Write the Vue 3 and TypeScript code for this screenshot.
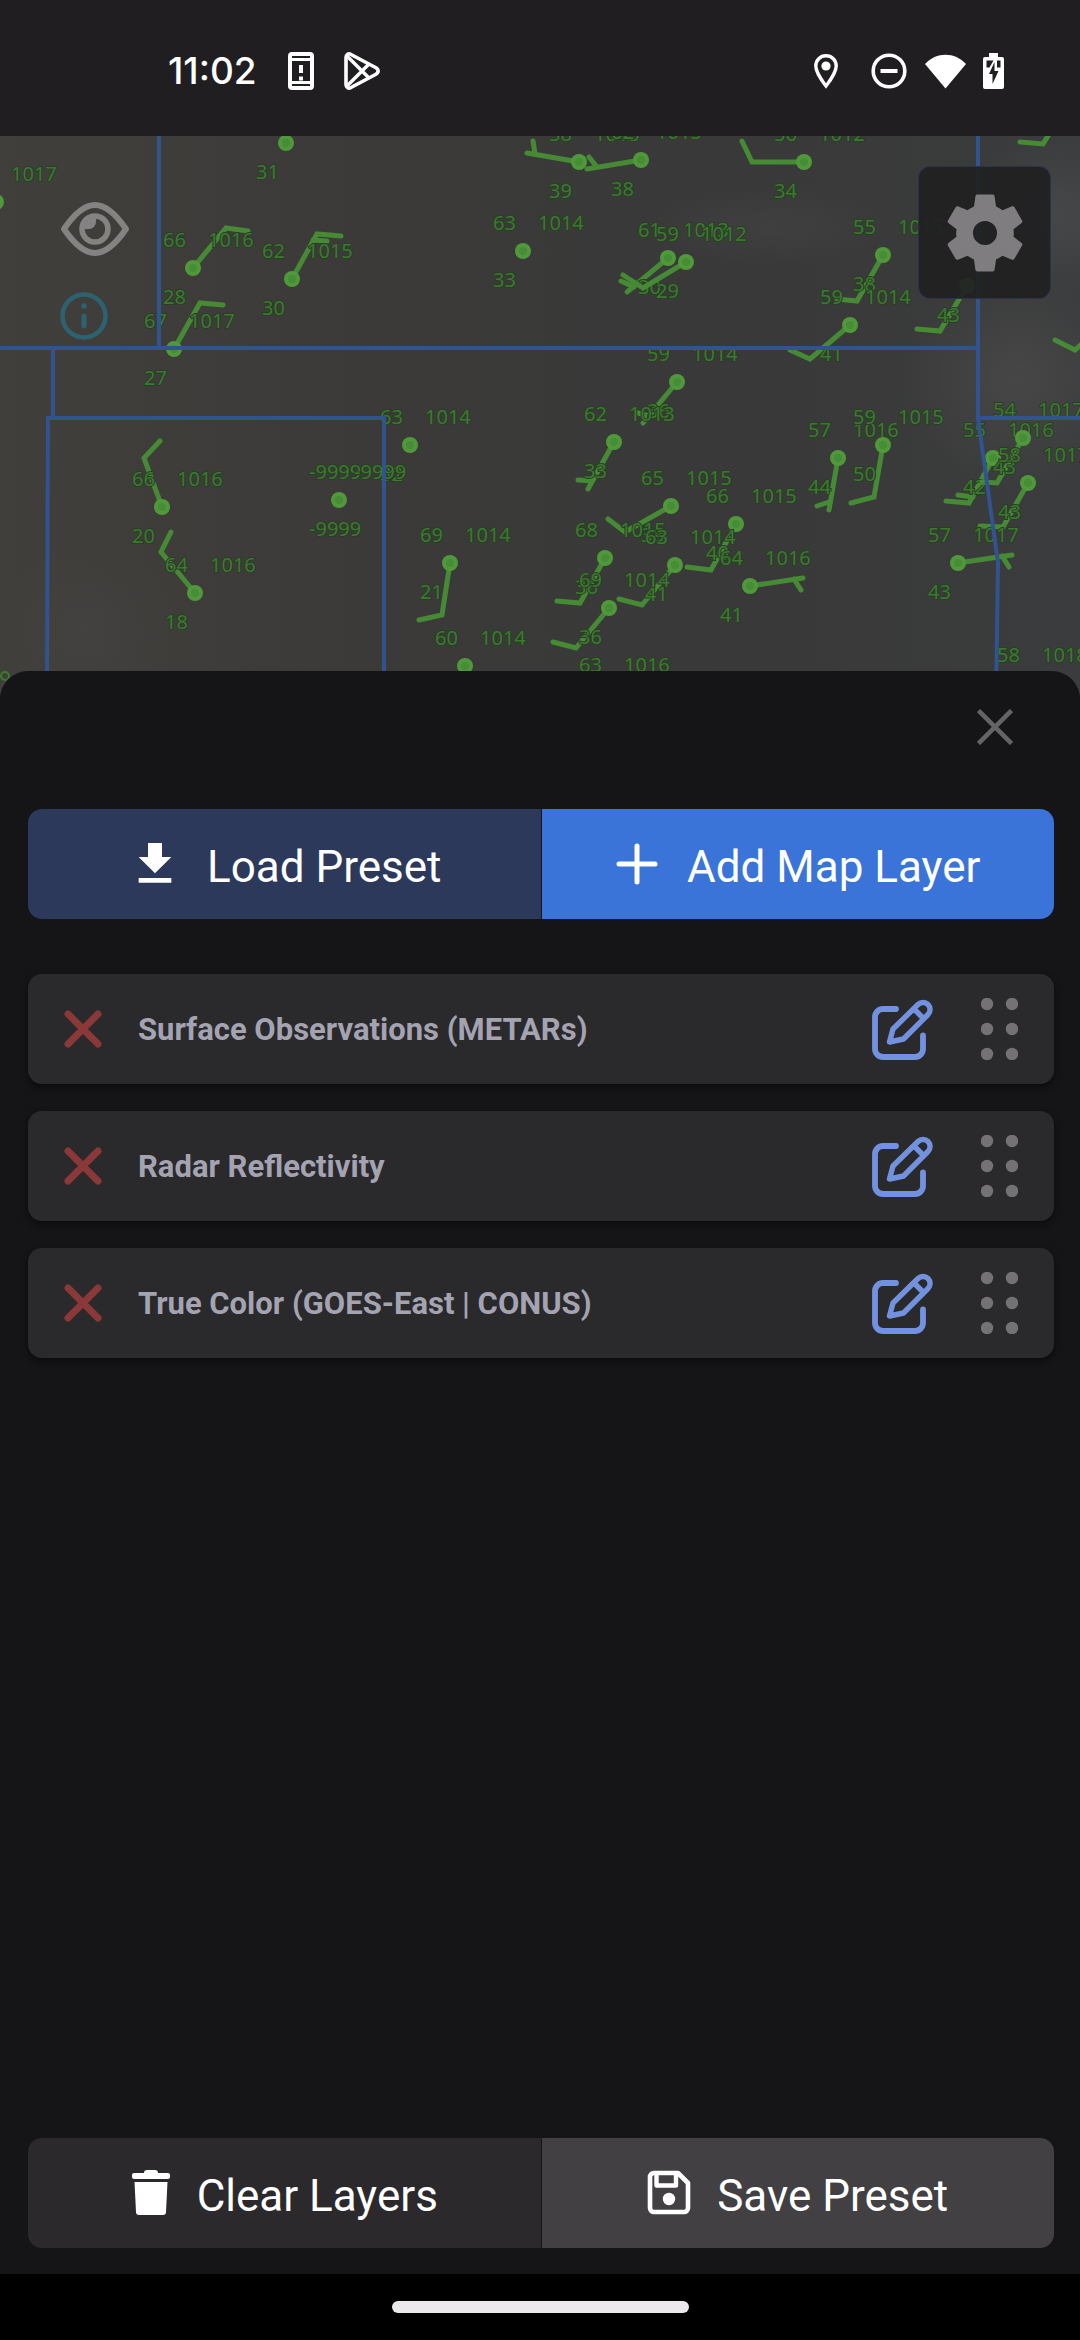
<script setup lang="ts">
import { ref } from 'vue'

interface Station {
  x: number
  y: number
  temp?: string
  pressure?: string
  dew?: string
  barb?: string
}

interface Layer {
  id: number
  name: string
}

const stations: Station[] = [
  { x: -4, y: 202, pressure: '1017' },
  { x: 286, y: 143, dew: '31' },
  { x: 193, y: 268, temp: '66', pressure: '1016', dew: '28', barb: 'M193 268L226 228L248 231' },
  { x: 292, y: 279, temp: '62', pressure: '1015', dew: '30', barb: 'M292 279L317 234L341 236M313 240L327 241' },
  { x: 174, y: 349, temp: '67', pressure: '1017', dew: '27', barb: 'M174 349L200 303L223 305' },
  { x: 579, y: 162, temp: '58', pressure: '1015', dew: '39', barb: 'M579 162L527 153M535 154L533 141' },
  { x: 641, y: 160, temp: '62', pressure: '1015', dew: '38', barb: 'M641 160L587 169M597 167L589 157' },
  { x: 804, y: 162, temp: '56', pressure: '1012', dew: '34', barb: 'M804 162H752L742 141' },
  { x: 523, y: 251, temp: '63', pressure: '1014', dew: '33' },
  { x: 668, y: 258, temp: '61', pressure: '1013', dew: '30', barb: 'M668 258L627 292M634 287L621 281' },
  { x: 686, y: 262, temp: '59', pressure: '1012', dew: '29', barb: 'M686 262L643 288L623 275' },
  { x: 677, y: 382, temp: '59', pressure: '1014', dew: '36', barb: 'M677 382L643 423M649 416L638 413' },
  { x: 410, y: 445, temp: '63', pressure: '1014', dew: '32' },
  { x: 614, y: 442, temp: '62', pressure: '1013', dew: '33', barb: 'M614 442L588 489M592 481L578 480' },
  { x: 671, y: 506, temp: '65', pressure: '1015', dew: '38', barb: 'M671 506L625 532L608 519' },
  { x: 736, y: 524, temp: '66', pressure: '1015', dew: '40', barb: 'M736 524L711 570L687 567' },
  { x: 605, y: 558, temp: '68', pressure: '1015', dew: '36', barb: 'M605 558L580 603L557 601' },
  { x: 675, y: 565, temp: '63', pressure: '1014', dew: '41', barb: 'M675 565L642 605L619 599' },
  { x: 609, y: 608, temp: '69', pressure: '1014', dew: '36', barb: 'M609 608L576 648L553 642' },
  { x: 750, y: 586, temp: '64', pressure: '1016', dew: '41', barb: 'M750 586L803 578M794 579L801 590' },
  { x: 450, y: 563, temp: '69', pressure: '1014', dew: '21', barb: 'M450 563L442 615L419 620' },
  { x: 465, y: 666, temp: '60', pressure: '1014' },
  { x: 609, y: 693, temp: '63', pressure: '1016' },
  { x: 162, y: 507, temp: '66', pressure: '1016', dew: '20', barb: 'M162 507L144 458L160 441' },
  { x: 195, y: 593, temp: '64', pressure: '1016', dew: '18', barb: 'M195 593L161 552L171 532' },
  { x: 339, y: 500, temp: '-9999', pressure: '-9999', dew: '-9999' },
  { x: 883, y: 255, temp: '55', pressure: '1015', dew: '38', barb: 'M883 255L857 301L837 299' },
  { x: 850, y: 325, temp: '59', pressure: '1014', dew: '41', barb: 'M850 325L810 359L790 350' },
  { x: 967, y: 286, dew: '43', barb: 'M967 286L940 331L917 329' },
  { x: 1064, y: 110, barb: 'M1064 110L1043 144L1020 142' },
  { x: 1112, y: 318, barb: 'M1112 318L1075 350L1055 340' },
  { x: 838, y: 458, temp: '57', pressure: '1016', dew: '44', barb: 'M838 458L829 510M829 502L817 506' },
  { x: 883, y: 445, temp: '59', pressure: '1015', dew: '50', barb: 'M883 445L874 497L851 503' },
  { x: 993, y: 458, temp: '55', pressure: '1016', dew: '42', barb: 'M993 458L969 503L946 501M973 497L958 495' },
  { x: 1023, y: 438, temp: '54', pressure: '1017', dew: '43', barb: 'M1023 438L997 483L982 482' },
  { x: 1028, y: 483, temp: '58', pressure: '1017', dew: '43', barb: 'M1028 483L1003 527L980 526' },
  { x: 958, y: 563, temp: '57', pressure: '1017', dew: '43', barb: 'M958 563L1012 555M1002 556L1009 567' },
  { x: 1027, y: 683, temp: '58', pressure: '1018' },
]

const layers = ref<Layer[]>([
  { id: 1, name: 'Surface Observations (METARs)' },
  { id: 2, name: 'Radar Reflectivity' },
  { id: 3, name: 'True Color (GOES-East | CONUS)' },
])

const dots = [6, 31, 56].flatMap((y) => [6, 31].map((x) => ({ x, y })))

function removeLayer(id: number) {
  layers.value = layers.value.filter((layer) => layer.id !== id)
}
</script>

<template>
  <div class="app">
    <header class="status">
      <div class="status-left">
        <time class="clock">11:02</time>
        <svg width="26" height="38" viewBox="0 0 26 38">
          <rect x="2" y="2" width="22" height="34" rx="2" fill="none" stroke="#fff" stroke-width="4" />
          <path d="M3 7.500H23M3 30.500H23" stroke="#fff" stroke-width="3" />
          <path d="M13 13v8M13 24.500v4" stroke="#fff" stroke-width="4" />
        </svg>
        <svg class="play" width="36" height="38" viewBox="0 0 36 38" fill="none" stroke="#fff" stroke-linejoin="round">
          <path d="M2 5.500C2 2.500 4.500 1 7 2.500L31.500 15.500C35 17.500 35 20.500 31.500 22.500L7 35.500C4.500 37 2 35.500 2 32.500Z" stroke-width="3.600" />
          <path d="M3 4L25 26M3 34L25 12" stroke-width="3.400" />
        </svg>
      </div>
      <div class="status-right">
        <svg class="pin" width="24" height="35" viewBox="0 0 24 35">
          <path d="M12 1.800C6.200 1.800 1.800 6.300 1.800 12C1.800 19 12 32 12 32S22.200 19 22.200 12C22.200 6.300 17.800 1.800 12 1.800Z" fill="none" stroke="#fff" stroke-width="3.400" />
          <circle cx="12" cy="12" r="4.600" fill="#fff" />
        </svg>
        <svg class="dnd" width="36" height="36" viewBox="0 0 36 36" stroke="#fff" fill="none">
          <circle cx="18" cy="18" r="15.800" stroke-width="3.600" />
          <path d="M9.500 18h17" stroke-width="4" />
        </svg>
        <svg class="wifi" width="41" height="35" viewBox="0 0 41 35">
          <path d="M20.500 34.500L0 10C11 -2.500 30 -2.500 41 10Z" fill="#fff" />
        </svg>
        <svg width="21" height="36" viewBox="0 0 21 36">
          <path d="M6 0h9v4h4a2 2 0 0 1 2 2v28a2 2 0 0 1-2 2H2a2 2 0 0 1-2-2V6a2 2 0 0 1 2-2h4z" fill="#fff" />
          <path d="M3.500 7.500h7l-4 7h-3zM14 7.500h3.500v7H14zM11.500 9v9H15.500L9.500 31V21H6z" fill="#201e21" />
        </svg>
      </div>
    </header>

    <section class="map" aria-label="Weather map">
      <svg class="map-canvas" viewBox="0 136 1080 563" preserveAspectRatio="xMinYMin slice">
        <g v-for="(s, i) in stations" :key="i">
          <path v-if="s.barb" :d="s.barb" class="barb" />
          <circle :cx="s.x" :cy="s.y" r="8" class="dot" />
          <circle :cx="s.x" :cy="s.y" r="4" class="dot-core" />
          <text v-if="s.temp" :x="s.x - 30" :y="s.y - 21" class="obs">{{ s.temp }}</text>
          <text v-if="s.pressure" :x="s.x + 15" :y="s.y - 21" class="obs">{{ s.pressure }}</text>
          <text v-if="s.dew" :x="s.x - 30" :y="s.y + 36" class="obs">{{ s.dew }}</text>
        </g>
        <circle cx="5" cy="676" r="4" fill="none" stroke="#3b7a2e" stroke-width="2" />
        <path
          class="border-line"
          d="M159 136V348M0 348H977M53 348V418M47 671L48 418H386M384 418V700M978 136V418H1080M978 418L998 563L996 700"
        />
      </svg>

      <div class="map-tools">
        <button type="button" class="ghost" aria-label="Toggle visibility">
          <svg width="70" height="54" viewBox="0 0 70 54" fill="none" stroke="#858382">
            <path d="M4 27C17 8 27 3 35 3S53 8 66 27C53 46 43 51 35 51S17 46 4 27Z" stroke-width="6" stroke-linejoin="round" />
            <circle cx="35" cy="27" r="13" stroke-width="5.500" />
            <path d="M25 27V21L32 16H36C37 24 33 28 25 27Z" fill="#858382" stroke="none" />
          </svg>
        </button>
        <button type="button" class="ghost" aria-label="Information">
          <svg width="48" height="48" viewBox="0 0 48 48" fill="none" stroke="#2d6270">
            <circle cx="24" cy="24" r="21.500" stroke-width="4.500" />
            <path d="M24 24v10" stroke-width="5" stroke-linecap="round" />
            <circle cx="24" cy="14" r="2.800" fill="#2d6270" stroke="none" />
          </svg>
        </button>
      </div>

      <button type="button" class="settings" aria-label="Settings">
        <svg width="96" height="96" viewBox="0 0 24 24">
          <path
            fill="#7f7d7f"
            fill-rule="evenodd"
            d="M19.140 12.940c.04-.3.06-.61.06-.94 0-.32-.02-.64-.07-.94l2.030-1.580c.18-.14.23-.41.12-.61l-1.920-3.320c-.12-.22-.37-.29-.59-.22l-2.390.96c-.5-.38-1.030-.7-1.620-.94L14.400 2.810c-.04-.24-.24-.41-.48-.41h-3.840c-.24 0-.43.17-.47.41L9.250 5.350C8.660 5.590 8.120 5.920 7.630 6.290L5.240 5.330c-.22-.08-.47 0-.59.22L2.740 8.870c-.12.21-.08.47.12.61l2.030 1.580C4.840 11.360 4.800 11.690 4.800 12s.02.64.07.94l-2.030 1.580c-.18.14-.23.41-.12.61l1.920 3.320c.12.22.37.29.59.22l2.390-.96c.5.38 1.030.7 1.620.94l.36 2.540c.05.24.24.41.48.41h3.840c.24 0 .44-.17.47-.41l.36-2.540c.59-.24 1.130-.56 1.620-.94l2.390.96c.22.08.47 0 .59-.22l1.920-3.320c.12-.22.07-.47-.12-.61zM12 15a3 3 0 1 1 0-6 3 3 0 0 1 0 6z"
          />
        </svg>
      </button>
    </section>

    <main class="sheet">
      <div class="sheet-head">
        <button type="button" class="ghost" aria-label="Close">
          <svg width="36" height="36" viewBox="0 0 36 36">
            <path d="M1.500 1.500L34.500 34.500M34.500 1.500L1.500 34.500" stroke="#646365" stroke-width="4.500" />
          </svg>
        </button>
      </div>

      <div class="pair">
        <button type="button" class="action load">
          <svg width="56" height="56" viewBox="0 0 24 24" fill="#fff">
            <path d="M19 9h-4V3H9v6H5l7 7zM5 18v2h14v-2z" />
          </svg>
          <span>Load Preset</span>
        </button>
        <button type="button" class="action add">
          <svg width="48" height="48" viewBox="0 0 48 48" stroke="#fff" stroke-width="5" stroke-linecap="round">
            <path d="M22 6v36M4 24h36" />
          </svg>
          <span>Add Map Layer</span>
        </button>
      </div>

      <ul class="layers">
        <li v-for="layer in layers" :key="layer.id" class="layer">
          <button type="button" class="ghost" :aria-label="'Remove ' + layer.name" @click="removeLayer(layer.id)">
            <svg width="38" height="38" viewBox="0 0 38 38">
              <path d="M4 4L34 34M34 4L4 34" stroke="#8b3838" stroke-width="7" stroke-linecap="round" />
            </svg>
          </button>
          <span class="layer-name">{{ layer.name }}</span>
          <button type="button" class="ghost" :aria-label="'Edit ' + layer.name">
            <svg width="61" height="61" viewBox="0 0 61 61" fill="none" stroke="#7291df" stroke-linecap="round" stroke-linejoin="round">
              <path d="M24 10H11a8 8 0 0 0-8 8v32a8 8 0 0 0 8 8h32a8 8 0 0 0 8-8V36.500" stroke-width="5.800" />
              <path d="M46 5.500L21 30L17.500 43L31.500 40L56 15.500a7 7 0 0 0-10-10zM42.500 10.500L50.500 18.500" stroke-width="5.400" />
            </svg>
          </button>
          <button type="button" class="ghost handle" :aria-label="'Reorder ' + layer.name">
            <svg width="37" height="62" viewBox="0 0 37 62" fill="#747275">
              <circle v-for="(d, i) in dots" :key="i" :cx="d.x" :cy="d.y" r="6.200" />
            </svg>
          </button>
        </li>
      </ul>

      <div class="pair bottom">
        <button type="button" class="action clear">
          <svg width="42" height="46" viewBox="0 0 42 46" fill="#fff">
            <path d="M13 3q0-3 3-3h8q3 0 3 3h10q2 0 2 2v2q0 2-2 2H3q-2 0-2-2V5q0-2 2-2zM3.500 12h33l-1.500 30q0 3-3 3H8q-3 0-3-3z" />
          </svg>
          <span>Clear Layers</span>
        </button>
        <button type="button" class="action save">
          <svg width="46" height="46" viewBox="0 0 46 46" fill="none" stroke="#fff" stroke-linejoin="round">
            <path d="M7 3H31L41 13V38a4 4 0 0 1-4 4H7a4 4 0 0 1-4-4V7a4 4 0 0 1 4-4Z" stroke-width="4.600" />
            <path d="M9.500 4V15.500H29V4" stroke-width="4.400" />
            <circle cx="22" cy="29" r="6.200" fill="#fff" stroke="none" />
          </svg>
          <span>Save Preset</span>
        </button>
      </div>
    </main>

    <footer class="nav"><span class="pill"></span></footer>
  </div>
</template>

<style>
body {
  margin: 0;
  background: #000;
}
</style>

<style scoped>
.app {
  display: flex;
  flex-direction: column;
  min-height: 100vh;
  font-family: Roboto, 'Liberation Sans', sans-serif;
  color: #fff;
}

svg {
  display: block;
  flex: none;
}

button {
  border: 0;
  font: inherit;
  color: inherit;
  cursor: pointer;
}

.ghost {
  padding: 0;
  background: none;
}

.status {
  display: flex;
  justify-content: space-between;
  align-items: center;
  box-sizing: border-box;
  height: 136px;
  padding: 6px 76px 0 168px;
  background: #201e21;
}

.status-left,
.status-right {
  display: flex;
  align-items: center;
}

.clock {
  font: 500 37px/40px Inter, Roboto, sans-serif;
  margin-right: 31px;
}

.play {
  margin-left: 30px;
}

.pin {
  margin-right: 33px;
}

.dnd {
  margin-right: 18px;
}

.wifi {
  margin-right: 17px;
}

.map {
  position: relative;
  height: 563px;
  margin-bottom: -28px;
  overflow: hidden;
  background:
    radial-gradient(ellipse 90px 80px at 98% 14%, #50515388, transparent),
    radial-gradient(ellipse 110px 110px at 94% 43%, #54535377, transparent),
    radial-gradient(ellipse 120px 40px at 71% 16%, #4c4c4d55, transparent),
    radial-gradient(ellipse 90px 90px at 8% 88%, #47464677, transparent),
    linear-gradient(90deg, #403f3b, #3b3a39 35%, #393939 70%, #3b3c3d);
}

.map-canvas {
  width: 100%;
  height: 100%;
}

.barb {
  fill: none;
  stroke: #468a35;
  stroke-width: 5;
  stroke-linecap: round;
}

.dot {
  fill: #50993b;
}

.dot-core {
  fill: #478c36;
}

.obs {
  font: 20px 'Noto Sans', sans-serif;
  fill: #3b7a2e;
  stroke: #2a3e26;
  stroke-width: 2px;
  paint-order: stroke;
}

.border-line {
  fill: none;
  stroke: #31538f;
  stroke-width: 4;
}

.map-tools {
  position: absolute;
  top: 66px;
  left: 60px;
  display: flex;
  flex-direction: column;
  align-items: flex-start;
  gap: 36px;
}

.settings {
  position: absolute;
  top: 30px;
  right: 29px;
  display: flex;
  align-items: center;
  justify-content: center;
  box-sizing: border-box;
  width: 133px;
  height: 133px;
  padding: 0;
  border: 1px solid #26344e;
  border-radius: 12px;
  background: rgba(32, 32, 33, 0.93);
}

.sheet {
  position: relative;
  flex: 1;
  display: flex;
  flex-direction: column;
  padding: 0 26px 26px 28px;
  border-radius: 28px 28px 0 0;
  background: #151416;
}

.sheet-head {
  display: flex;
  justify-content: flex-end;
  padding: 38px 41px 64px;
}

.pair {
  display: grid;
  grid-template-columns: 1fr 1fr;
  gap: 1px;
  border-radius: 14px;
  overflow: hidden;
}

.action {
  display: flex;
  align-items: center;
  justify-content: center;
  gap: 24px;
  height: 110px;
  padding: 0;
  font-size: 44px;
  line-height: 52px;
}

.action span {
  padding-top: 6px;
}

.load {
  background: #2c395a;
}

.add {
  background: #3a74d9;
}

.clear {
  background: #2b292c;
}

.save {
  background: #424043;
}

.layers {
  display: flex;
  flex-direction: column;
  gap: 27px;
  margin: 55px 0;
  padding: 0;
  list-style: none;
}

.layer {
  display: flex;
  align-items: center;
  height: 110px;
  padding: 0 36px;
  border-radius: 14px;
  background: #2a292b;
  box-shadow: 0 3px 6px #0c0b0d;
}

.layer-name {
  flex: 1;
  padding: 2px 36px 0;
  font-size: 31px;
  line-height: 36px;
  font-weight: 700;
  color: #a4a3b2;
}

.handle {
  margin-left: 48px;
}

.bottom {
  margin-top: auto;
}

.nav {
  display: flex;
  align-items: center;
  justify-content: center;
  height: 66px;
  background: #000;
}

.pill {
  width: 297px;
  height: 12px;
  border-radius: 6px;
  background: #ebe9eb;
}
</style>
